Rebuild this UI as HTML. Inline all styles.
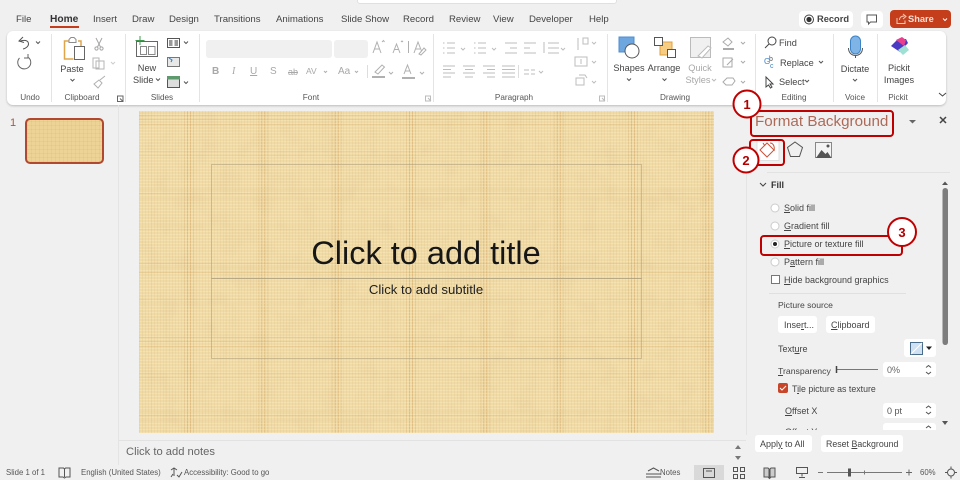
<!DOCTYPE html>
<html><head><meta charset="utf-8"><style>
html,body{margin:0;padding:0}
body{width:960px;height:480px;overflow:hidden;position:relative;background:#f0f0f0;font-family:"Liberation Sans",sans-serif;color:#444}
#w{position:absolute;left:0;top:0;width:960px;height:480px;overflow:hidden;filter:blur(.35px);background:#f0f0f0}
.t{position:absolute;white-space:nowrap;font-size:9px;line-height:12px}
.c{text-align:center;transform:translateX(-50%)}
.g{color:#a8a8a8}
.l{color:#555;font-size:8.2px}
.tab{top:14px;font-size:9.6px}
.rb{font-size:9.2px}
.p{font-size:9px}
.s{font-size:7.8px;color:#555;top:467px}
.b{position:absolute;background:#fff;border-radius:3px}
.sep{position:absolute;top:34px;height:68px;width:1px;background:#e4e4e4}
svg{position:absolute;overflow:visible}
u{text-decoration-thickness:1px}
</style></head><body><div id="w">
<div class="b" style="left:357px;top:-10px;width:258px;height:12px;border:1px solid #e0e0e0"></div>

<div class="t tab" style="left:16px">File</div>
<div class="t tab" style="left:50px;font-size:10.2px;font-weight:bold;color:#333">Home</div>
<div style="position:absolute;left:50px;top:26px;width:29px;height:2px;background:#c43e1c"></div>
<div class="t tab" style="left:93px">Insert</div>
<div class="t tab" style="left:132px">Draw</div>
<div class="t tab" style="left:169px">Design</div>
<div class="t tab" style="left:214px">Transitions</div>
<div class="t tab" style="left:276px">Animations</div>
<div class="t tab" style="left:341px">Slide Show</div>
<div class="t tab" style="left:403px">Record</div>
<div class="t tab" style="left:449px">Review</div>
<div class="t tab" style="left:493px">View</div>
<div class="t tab" style="left:529px">Developer</div>
<div class="t tab" style="left:589px">Help</div>

<div class="b" style="left:799px;top:11px;width:54px;height:17px;border-radius:4px"></div>
<svg style="left:0;top:0" width="960" height="40"><circle cx="809" cy="19.500" r="4.500" fill="none" stroke="#444"/><circle cx="809" cy="19.500" r="2.600" fill="#333"/></svg>
<div class="t" style="left:817px;top:13px;font-size:9.300px;font-weight:bold;color:#444">Record</div>
<div class="b" style="left:861px;top:11px;width:22px;height:17px;border-radius:4px"></div>
<svg style="left:0;top:0" width="960" height="40"><path d="M867 15h9.500v7h-6l-2 2v-2h-1.500z" fill="none" stroke="#555"/></svg>
<div class="b" style="left:890px;top:10px;width:61px;height:18px;background:#c43e1c;border-radius:4px"></div>
<svg style="left:0;top:0" width="960" height="40"><path d="M897 18v5.500h8v-3M899.500 20c0-3 2-4 5-4M903 14l3 2.500-3 2.500" fill="none" stroke="#f4c9b8"/><path d="M943 18.500l2 2 2-2" fill="none" stroke="#fff"/></svg>
<div class="t" style="left:908px;top:13px;font-size:9.300px;font-weight:bold;color:#f9ddd2">Share</div>

<!-- Ribbon -->
<div class="b" style="left:7px;top:31px;width:939px;height:74px;border-radius:6px;box-shadow:0 1px 2px rgba(0,0,0,.22)"></div>
<div class="sep" style="left:51px"></div><div class="sep" style="left:125px"></div><div class="sep" style="left:199px"></div>
<div class="sep" style="left:433px"></div><div class="sep" style="left:607px"></div><div class="sep" style="left:755px"></div>
<div class="sep" style="left:833px"></div><div class="sep" style="left:877px"></div>

<div class="t c l" style="left:30px;top:92px">Undo</div>
<div class="t c l" style="left:82px;top:92px">Clipboard</div>
<div class="t c l" style="left:162px;top:92px">Slides</div>
<div class="t c l" style="left:311px;top:92px">Font</div>
<div class="t c l" style="left:514px;top:92px">Paragraph</div>
<div class="t c l" style="left:675px;top:92px">Drawing</div>
<div class="t c l" style="left:794px;top:92px">Editing</div>
<div class="t c l" style="left:855px;top:92px">Voice</div>
<div class="t c l" style="left:898px;top:92px">Pickit</div>

<div style="position:absolute;left:206px;top:40px;width:126px;height:18px;background:#f0f0f0;border-radius:3px"></div>
<div style="position:absolute;left:334px;top:40px;width:34px;height:18px;background:#f0f0f0;border-radius:3px"></div>

<svg style="left:0;top:0" width="960" height="110" fill="none" stroke="#555" stroke-width="1">
<!-- undo/redo -->
<path d="M23 37l-4 4 5 1.500M19.500 41.500c4-2 9-1.500 9 2.500 0 2.500-3 4.500-5.500 5"/><path d="M36 41.500l2 2 2-2"/>
<path d="M28.500 57.500a6.500 6.500 0 1 1-9 0.500M28 54v4h-4" stroke="#666"/>
<!-- paste -->
<path d="M70 41h-5.500v18h9" stroke="#e1a549" stroke-width="1.500"/><path d="M78 41h3v5" stroke="#e1a549" stroke-width="1.500"/><path d="M69 39.500l2-2h3l2 2v3h-7z" stroke="#8c8c8c" fill="#fff"/>
<rect x="74.500" y="46.500" width="10" height="13" fill="#fff" stroke="#666"/>
<path d="M70.500 79l2 2 2-2"/>
<!-- cut/copy/painter -->
<path d="M96 38l4.500 9M102 38l-4.500 9" stroke="#a5a5a5"/><circle cx="96.500" cy="48.500" r="1.600" stroke="#a5a5a5"/><circle cx="101.500" cy="48.500" r="1.600" stroke="#a5a5a5"/>
<path d="M93 58h6v10h-6zM96 61h8v8h-8z" stroke="#b5b5b5" fill="#fff"/><path d="M111 62l2 2 2-2" stroke="#ccc"/>
<path d="M94 84l5-4 3 3-4 5zM100 80l5-4" stroke="#b0b0b0"/>
<!-- new slide -->
<rect x="136.500" y="41.500" width="21" height="15" stroke="#666"/><rect x="140.500" y="46.500" width="6" height="8" stroke="#888"/><rect x="148.500" y="46.500" width="6.500" height="8" stroke="#888"/>
<path d="M140 36v9M135.500 40.500h9" stroke="#3f9a4e"/>
<rect x="167.500" y="38.500" width="12" height="9" stroke="#555"/><rect x="169" y="40" width="3.500" height="6" fill="#999" stroke="none"/><rect x="174.500" y="40" width="3.500" height="6" fill="#999" stroke="none"/><path d="M184 41.500l2 2 2-2"/>
<rect x="167.500" y="57.500" width="12" height="9" stroke="#777" fill="#e8e8e8"/><path d="M169 58l3 2-1 2" stroke="#2b7ec4"/>
<rect x="167.500" y="76.500" width="12" height="11" stroke="#555" fill="#ddd"/><rect x="167" y="76" width="13" height="3.500" fill="#5f9a6e" stroke="none"/><path d="M184 81.500l2 2 2-2"/>
<path d="M156 78.500l2 2 2-2"/>
<!-- dialog launchers -->
<path d="M117.500 96h5.500v5.500h-5.500zM120 98.500l3 3" stroke="#666"/>
<path d="M425.500 96h5v5h-5zM428 98l3 3" stroke="#bbb"/><path d="M599.500 96h5v5h-5zM602 98l3 3" stroke="#bbb"/>
<!-- font row icons -->
<g stroke="#b0b0b0"><path d="M373 53l4-11 4 11M374.500 49h5M382 42l1.500-1.500 1 1.500"/><path d="M393 53l3.500-9 3.500 9M394.500 49.500h4M401 42l1-1 1 1"/><path d="M408.500 41v12"/><path d="M414 53l4-11 3.500 9M415.500 49h4.500M419 54l5-6 2 2-5 5z"/>
<path d="M355 71l1.500 1.500 1.500-1.500"/><path d="M367.500 65v13" stroke="#ddd"/>
<path d="M375 72l7-7 2.500 2-6.500 7z"/><path d="M372 77h13" stroke-width="2"/><path d="M389 72l2 2 2-2"/>
<path d="M404 74l3.500-9 3.500 9M405 71h5"/><path d="M402 78h13" stroke-width="2"/><path d="M420 72l2 2 2-2"/>
<path d="M324 71l1.500 1.500 1.500-1.500"/></g>
<!-- paragraph -->
<g stroke="#bdbdbd"><path d="M447 43h8M447 48h8M447 53h8M443 43h1.500M443 48h1.500M443 53h1.500"/><path d="M478 43h8M478 48h8M478 53h8M474 43h1.500M474 48h1.500M474 53h1.500"/><path d="M505 43h12M510 48h7M510 53h7"/><path d="M505 53h12"/><path d="M524 43h12M524 48h6M524 53h12"/><path d="M548 43h11M548 48h11M548 53h11M544 42v11"/><path d="M578 38v12M583 38h5v6h-5z"/>
<path d="M443 66h12M443 69.500h8M443 73h12M443 77h8"/><path d="M463 66h12M465 69.500h8M463 73h12M465 77h8"/><path d="M483 66h12M487 69.500h8M483 73h12M487 77h8"/><path d="M502 66h13M502 69.500h13M502 73h13M502 77h13"/>
<path d="M524 70h5M531 70h4M524 74h5M531 74h4"/><path d="M518.500 65v13" stroke="#ddd"/><path d="M575 57h12v9h-12zM581 59v5"/><path d="M576 78h8v7h-8zM579 75h6l2 3"/>
<path d="M461 48l2 2 2-2M492 48l2 2 2-2M561 48l2 2 2-2M592 42l2 2 2-2M592 61l2 2 2-2M592 81l2 2 2-2M539 71l2 2 2-2"/></g>
<!-- shapes -->
<rect x="619" y="37" width="15" height="15" fill="#6ea6e0" stroke="#4f8ed1"/><circle cx="632" cy="51" r="7" fill="#fff" stroke="#555"/><path d="M627 78.500l2 2 2-2"/>
<!-- arrange -->
<rect x="660" y="42" width="12" height="13" fill="#f6cd83" stroke="#e0a040"/><rect x="654.500" y="37.500" width="8" height="8" fill="#fff" stroke="#555"/><rect x="667.500" y="49.500" width="8" height="8" fill="#fff" stroke="#555"/><path d="M662.500 78.500l2 2 2-2"/>
<!-- quick styles -->
<rect x="690.500" y="37.500" width="20" height="20" fill="#f0f0f0" stroke="#bbb"/><path d="M698 56l10-10 3 2-9 10z" fill="#fff" stroke="#bbb"/><path d="M712 79l2 2 2-2" stroke="#bbb"/>
<g stroke="#aaa"><path d="M723 42l5-4 4 4-4 4z"/><path d="M723 49h11" stroke-width="2"/><path d="M723 58h9v9h-9zM727 65l6-6"/><path d="M723 82l4-4h6l2 3-3 4h-6z"/><path d="M741 42l2 2 2-2M741 61l2 2 2-2M741 81l2 2 2-2"/></g>
<!-- find etc -->
<circle cx="772" cy="41" r="4" stroke="#444"/><path d="M769 44l-4 4" stroke="#444"/>
<text x="764" y="64" font-size="8" fill="#3b7fc4" stroke="none" font-family="Liberation Sans">G</text><text x="769" y="61" font-size="7" fill="#555" stroke="none" font-family="Liberation Sans">b</text><text x="770" y="68" font-size="7" fill="#3b7fc4" stroke="none" font-family="Liberation Sans">c</text>
<path d="M766 77l0 10 2.500-2 2 3 1.500-1-2-3h3z" stroke="#444"/><path d="M819 61l2 2 2-2"/><path d="M805 80l2 2 2-2"/>
<!-- mic -->
<rect x="850.500" y="36" width="10" height="18" rx="5" fill="#7fb4e6" stroke="#3d84c6"/><path d="M848.500 48c0 10 14 10 14 0M855.500 55v3" stroke="#555"/><path d="M853 79l2 2 2-2"/>
<!-- pickit -->
<path d="M891 46l7-7 8 0 2 4-8 9z" fill="#4b3bc4" stroke="none"/><path d="M896 40l6-3 4 3-2 6z" fill="#e8408f" stroke="none"/><path d="M898 50l7-5 4 5-6 5z" fill="#9fe0d4" stroke="none"/>
<path d="M939 93l3.500 3 3.500-3" stroke="#444"/>
</svg>

<div class="t c rb" style="left:72px;top:63px">Paste</div>
<div class="t c rb" style="left:147px;top:62px">New</div>
<div class="t rb" style="left:133px;top:74px">Slide</div>
<div class="t c rb" style="left:629px;top:62px">Shapes</div>
<div class="t c rb" style="left:664px;top:62px">Arrange</div>
<div class="t c g rb" style="left:700px;top:62px">Quick</div>
<div class="t c g rb" style="left:698px;top:74px">Styles</div>
<div class="t rb" style="left:779px;top:37px">Find</div>
<div class="t rb" style="left:780px;top:57px">Replace</div>
<div class="t rb" style="left:779px;top:76px">Select</div>
<div class="t c rb" style="left:855px;top:63px">Dictate</div>
<div class="t c rb" style="left:899px;top:62px">Pickit</div>
<div class="t c rb" style="left:899px;top:74px">Images</div>

<div class="t g" style="left:212px;top:66px;font-size:10px;font-weight:bold">B</div>
<div class="t g" style="left:232px;top:66px;font-size:10px;font-style:italic;font-family:'Liberation Serif',serif">I</div>
<div class="t g" style="left:250px;top:66px;font-size:10px;text-decoration:underline">U</div>
<div class="t g" style="left:270px;top:66px;font-size:10px">S</div>
<div class="t g" style="left:288px;top:66px;font-size:9px;text-decoration:line-through">ab</div>
<div class="t g" style="left:306px;top:65px;font-size:8.500px">AV</div>
<div class="t g" style="left:338px;top:66px;font-size:10px">Aa</div>

<!-- Thumb pane -->
<div style="position:absolute;left:118px;top:105px;width:1px;height:360px;background:#e4e4e4"></div>
<div class="t" style="left:10px;top:117px;font-size:11px;color:#b0533c">1</div>
<div style="position:absolute;left:25px;top:118px;width:75px;height:42px;border:2px solid #b0492f;border-radius:5px;background:repeating-linear-gradient(90deg,rgba(190,140,70,.1) 0 1px,transparent 1px 4px),repeating-linear-gradient(0deg,rgba(190,140,70,.1) 0 1px,transparent 1px 4px),#eed396"></div>

<!-- Slide -->
<svg style="left:139px;top:111px" width="575" height="322">
<defs>
<pattern id="w1" width="3" height="3" patternUnits="userSpaceOnUse"><path d="M0 .5h3" stroke="#fff3d0" stroke-opacity=".28" fill="none"/><path d="M.5 0v3" stroke="#c89a55" stroke-opacity=".1" fill="none"/></pattern>
<pattern id="w2" width="74" height="74" patternUnits="userSpaceOnUse">
<g fill="none" stroke="#cf9f58">
<path d="M48.500 0v74M51.500 0v74" stroke-opacity=".38"/><path d="M45.500 0v74M54.500 0v74" stroke-opacity=".2"/>
<path d="M0 4.500h74M0 8.500h74M0 13.500h74" stroke-opacity=".2"/>
<path d="M0 40.500h74M0 44.500h74" stroke-opacity=".13"/>
<path d="M12.500 0v74M26.500 0v74" stroke-opacity=".08"/>
</g>
</pattern>
<filter id="f" x="0" y="0" width="100%" height="100%"><feTurbulence type="fractalNoise" baseFrequency="0.05 0.05" numOctaves="2" seed="4" result="a"/><feColorMatrix in="a" type="matrix" values="0 0 0 0 .78 0 0 0 0 .58 0 0 0 0 .3 1.800 0 0 0 -.8"/></filter>
</defs>
<rect width="575" height="322" fill="#f0dba6"/>
<rect width="575" height="322" filter="url(#f)" opacity=".4"/>
<rect width="575" height="322" fill="url(#w2)"/>
<rect width="575" height="322" fill="url(#w1)"/>
<g fill="none" stroke="#a89a78" stroke-opacity=".5"><rect x="72.500" y="53.500" width="430" height="114"/><rect x="72.500" y="167.500" width="430" height="80"/></g>
</svg>
<div class="t c" style="left:426px;top:232px;font-size:32.500px;line-height:42px;color:#161616">Click to add title</div>
<div class="t c" style="left:426px;top:282px;font-size:13.200px;line-height:16px;color:#222">Click to add subtitle</div>

<!-- Notes -->
<div style="position:absolute;left:119px;top:440px;width:627px;height:1px;background:#e2e2e2"></div>
<div class="t" style="left:126px;top:445px;font-size:11.200px;line-height:14px;color:#666">Click to add notes</div>
<svg style="left:0;top:0" width="960" height="480"><path d="M735 449l3-4 3 4zM735 456h6l-3 4z" fill="#777"/></svg>

<!-- Format panel -->
<div style="position:absolute;left:746px;top:171px;width:1px;height:264px;background:#e4e4e4"></div>
<div style="position:absolute;left:767px;top:172px;width:183px;height:1px;background:#e2e2e2"></div>
<div class="t" style="left:755px;top:112px;font-size:15.200px;line-height:20px;color:#ae6a58">Format Background</div>
<svg style="left:0;top:0" width="960" height="480" fill="none">
<path d="M909 120h7l-3.500 3.500z" fill="#666"/><path d="M940 117l6 6M946 117l-6 6" stroke="#444" stroke-width="1.500"/>
<rect x="757" y="140.500" width="22" height="20" fill="#fff" stroke="#e0e0e0"/>
<path d="M760 150l7-7 7 7-7 7zM763 143l2 3" stroke="#c8543a"/><path d="M770 143c3 0 5 3 4 8" stroke="#c8543a"/>
<path d="M795 142l7.500 5.500-3 9h-9l-3-9z" stroke="#555"/>
<rect x="815.500" y="142.500" width="16" height="15" fill="#f4f4f4" stroke="#888"/><path d="M816 158l5.500-8 4 4 2-2 4 6z" fill="#555"/><circle cx="828" cy="146" r="1.500" fill="#555"/>
<path d="M760 183l3 3 3-3" stroke="#444"/>
<circle cx="775" cy="208" r="4" fill="#fff" stroke="#ccc"/><circle cx="775" cy="226" r="4" fill="#fff" stroke="#ccc"/><circle cx="775" cy="244" r="4" fill="#fff" stroke="#ccc"/><circle cx="775" cy="244" r="2" fill="#222"/><circle cx="775" cy="262" r="4" fill="#fff" stroke="#ccc"/>
<rect x="771.500" y="275.500" width="8" height="8" fill="#fff" stroke="#777"/>
<path d="M769 293.500h137" stroke="#e0e0e0"/>
<rect x="942.500" y="188" width="5.500" height="157" rx="2.700" fill="#7d7d7d"/>
<path d="M942 185l3-3.500 3 3.500z" fill="#555"/><path d="M942 421h6l-3 4z" fill="#555"/>
</svg>
<div class="t" style="left:758px;top:179px;font-size:9px;font-weight:bold;padding-left:13px;color:#333">Fill</div>
<div class="t p" style="left:784px;top:202px"><u>S</u>olid fill</div>
<div class="t p" style="left:784px;top:220px"><u>G</u>radient fill</div>
<div class="t p" style="left:784px;top:238px"><u>P</u>icture or texture fill</div>
<div class="t p" style="left:784px;top:256px">P<u>a</u>ttern fill</div>
<div class="t p" style="left:784px;top:274px"><u>H</u>ide background graphics</div>
<div class="t" style="left:778px;top:299px;font-size:8.600px">Picture source</div>
<div class="b" style="left:778px;top:316px;width:39px;height:17px"></div>
<div class="t p" style="left:784px;top:319px">Inse<u>r</u>t...</div>
<div class="b" style="left:826px;top:316px;width:49px;height:17px"></div>
<div class="t p" style="left:831px;top:319px"><u>C</u>lipboard</div>
<div class="t p" style="left:778px;top:343px">Text<u>u</u>re</div>
<div class="b" style="left:904px;top:339px;width:32px;height:18px"></div>
<svg style="left:0;top:0" width="960" height="480"><rect x="910.500" y="342.500" width="12" height="12" fill="#cfe1f2" stroke="#4a6d8c"/><path d="M911 354l11-11" stroke="#fff"/><path d="M926 346.500h6l-3 3.500z" fill="#222"/></svg>
<div class="t" style="left:778px;top:365px;font-size:8.700px"><u>T</u>ransparency</div>
<svg style="left:0;top:0" width="960" height="480" fill="none"><path d="M836 369.500h42" stroke="#777"/><path d="M836.500 366v7" stroke="#444" stroke-width="1.500"/></svg>
<div class="b" style="left:883px;top:362px;width:53px;height:15px"></div>
<div class="t" style="left:887px;top:364px;font-size:9px;color:#666">0%</div>
<svg style="left:0;top:0" width="960" height="480" fill="none"><path d="M926 367.500l2.500-2 2.500 2M926 372l2.500 2 2.500-2" stroke="#555"/></svg>
<div style="position:absolute;left:778px;top:383px;width:10px;height:10px;background:#c8452a;border-radius:2px"></div>
<svg style="left:0;top:0" width="960" height="480" fill="none"><path d="M780 388l2 2 4-4" stroke="#fff"/></svg>
<div class="t" style="left:792px;top:383px;font-size:8.800px">T<u>i</u>le picture as texture</div>
<div class="t p" style="left:785px;top:405px"><u>O</u>ffset X</div>
<div class="b" style="left:883px;top:403px;width:53px;height:15px"></div>
<div class="t p" style="left:887px;top:405px;color:#555">0 pt</div>
<div style="position:absolute;left:750px;top:423px;width:190px;height:7px;overflow:hidden"><div class="t p" style="left:35px;top:3px"><u>O</u>ffset Y</div><div class="b" style="left:133px;top:0;width:53px;height:15px"></div></div>
<svg style="left:0;top:0" width="960" height="480" fill="none"><path d="M926 408l2.500-2 2.500 2M926 412l2.500 2 2.500-2M926 428l2.500-2 2.500 2" stroke="#555"/></svg>
<div class="b" style="left:755px;top:435px;width:57px;height:17px"></div>
<div class="t p" style="left:760px;top:438px">Appl<u>y</u> to All</div>
<div class="b" style="left:821px;top:435px;width:82px;height:17px"></div>
<div class="t" style="left:826px;top:438px;font-size:8.800px">Reset <u>B</u>ackground</div>

<!-- Annotations -->
<svg style="left:0;top:0" width="960" height="480" fill="none" stroke="#c00000">
<rect x="751" y="111" width="142" height="25" rx="3" stroke-width="2"/>
<rect x="750" y="140" width="34" height="25" rx="3" stroke-width="2"/>
<rect x="761" y="236" width="141" height="19" rx="3" stroke-width="2"/>
<circle cx="747" cy="104" r="13.500" fill="#fff" stroke-width="2"/>
<circle cx="746" cy="160" r="12.500" fill="#fff" stroke-width="2"/>
<circle cx="902" cy="232" r="14" fill="#fff" stroke-width="2"/>
</svg>
<div class="t c" style="left:747px;top:97px;font-size:13px;line-height:15px;font-weight:bold;color:#b00000">1</div>
<div class="t c" style="left:746px;top:153px;font-size:13px;line-height:15px;font-weight:bold;color:#b00000">2</div>
<div class="t c" style="left:902px;top:225px;font-size:13px;line-height:15px;font-weight:bold;color:#b00000">3</div>

<!-- Status bar -->
<div class="t s" style="left:6px">Slide 1 of 1</div>
<div class="t s" style="left:81px">English (United States)</div>
<div class="t s" style="left:184px">Accessibility: Good to go</div>
<div class="t s" style="left:660px">Notes</div>
<div class="t s" style="left:920px">60%</div>
<div style="position:absolute;left:694px;top:465px;width:30px;height:15px;background:#d9d9d9"></div>
<svg style="left:0;top:0" width="960" height="480" fill="none" stroke="#555">
<path d="M59 468h4.500l1 1 1-1h4.500v9h-4l-1.500 1-1.500-1h-4zM64.500 469v8"/>
<path d="M171 470l3-2 3 2M174 468v8M171 477l2-3M182 472l-3 5-2-2"/>
<path d="M648 471l5.500-3 5.500 3M646 474h15M646 477h15"/>
<rect x="703.500" y="468.500" width="11" height="9"/><path d="M706 471h6"/>
<path d="M733.500 467.500h4v4h-4zM740.500 467.500h4v4h-4zM733.500 474.500h4v4h-4zM740.500 474.500h4v4h-4z"/>
<path d="M764 468h4l1 1v9l-1-1h-4zM775 468h-4l-1 1v9l1-1h4z" fill="#ccc"/>
<path d="M796.500 467.500h11v6h-11zM802 473.500v3M799 477.500h6"/>
<path d="M818 472.500h5M827 472.500h75M864.500 470.500v4" stroke="#777"/>
<rect x="848" y="468.500" width="3" height="8" fill="#555" stroke="none"/>
<path d="M906 472.500h6M909 469.500v6" stroke="#666"/>
<circle cx="951" cy="472.500" r="3.500"/><path d="M951 466.500v2M951 476.500v2M945 472.500h2M955 472.500h2"/>
</svg>
</div></body></html>
